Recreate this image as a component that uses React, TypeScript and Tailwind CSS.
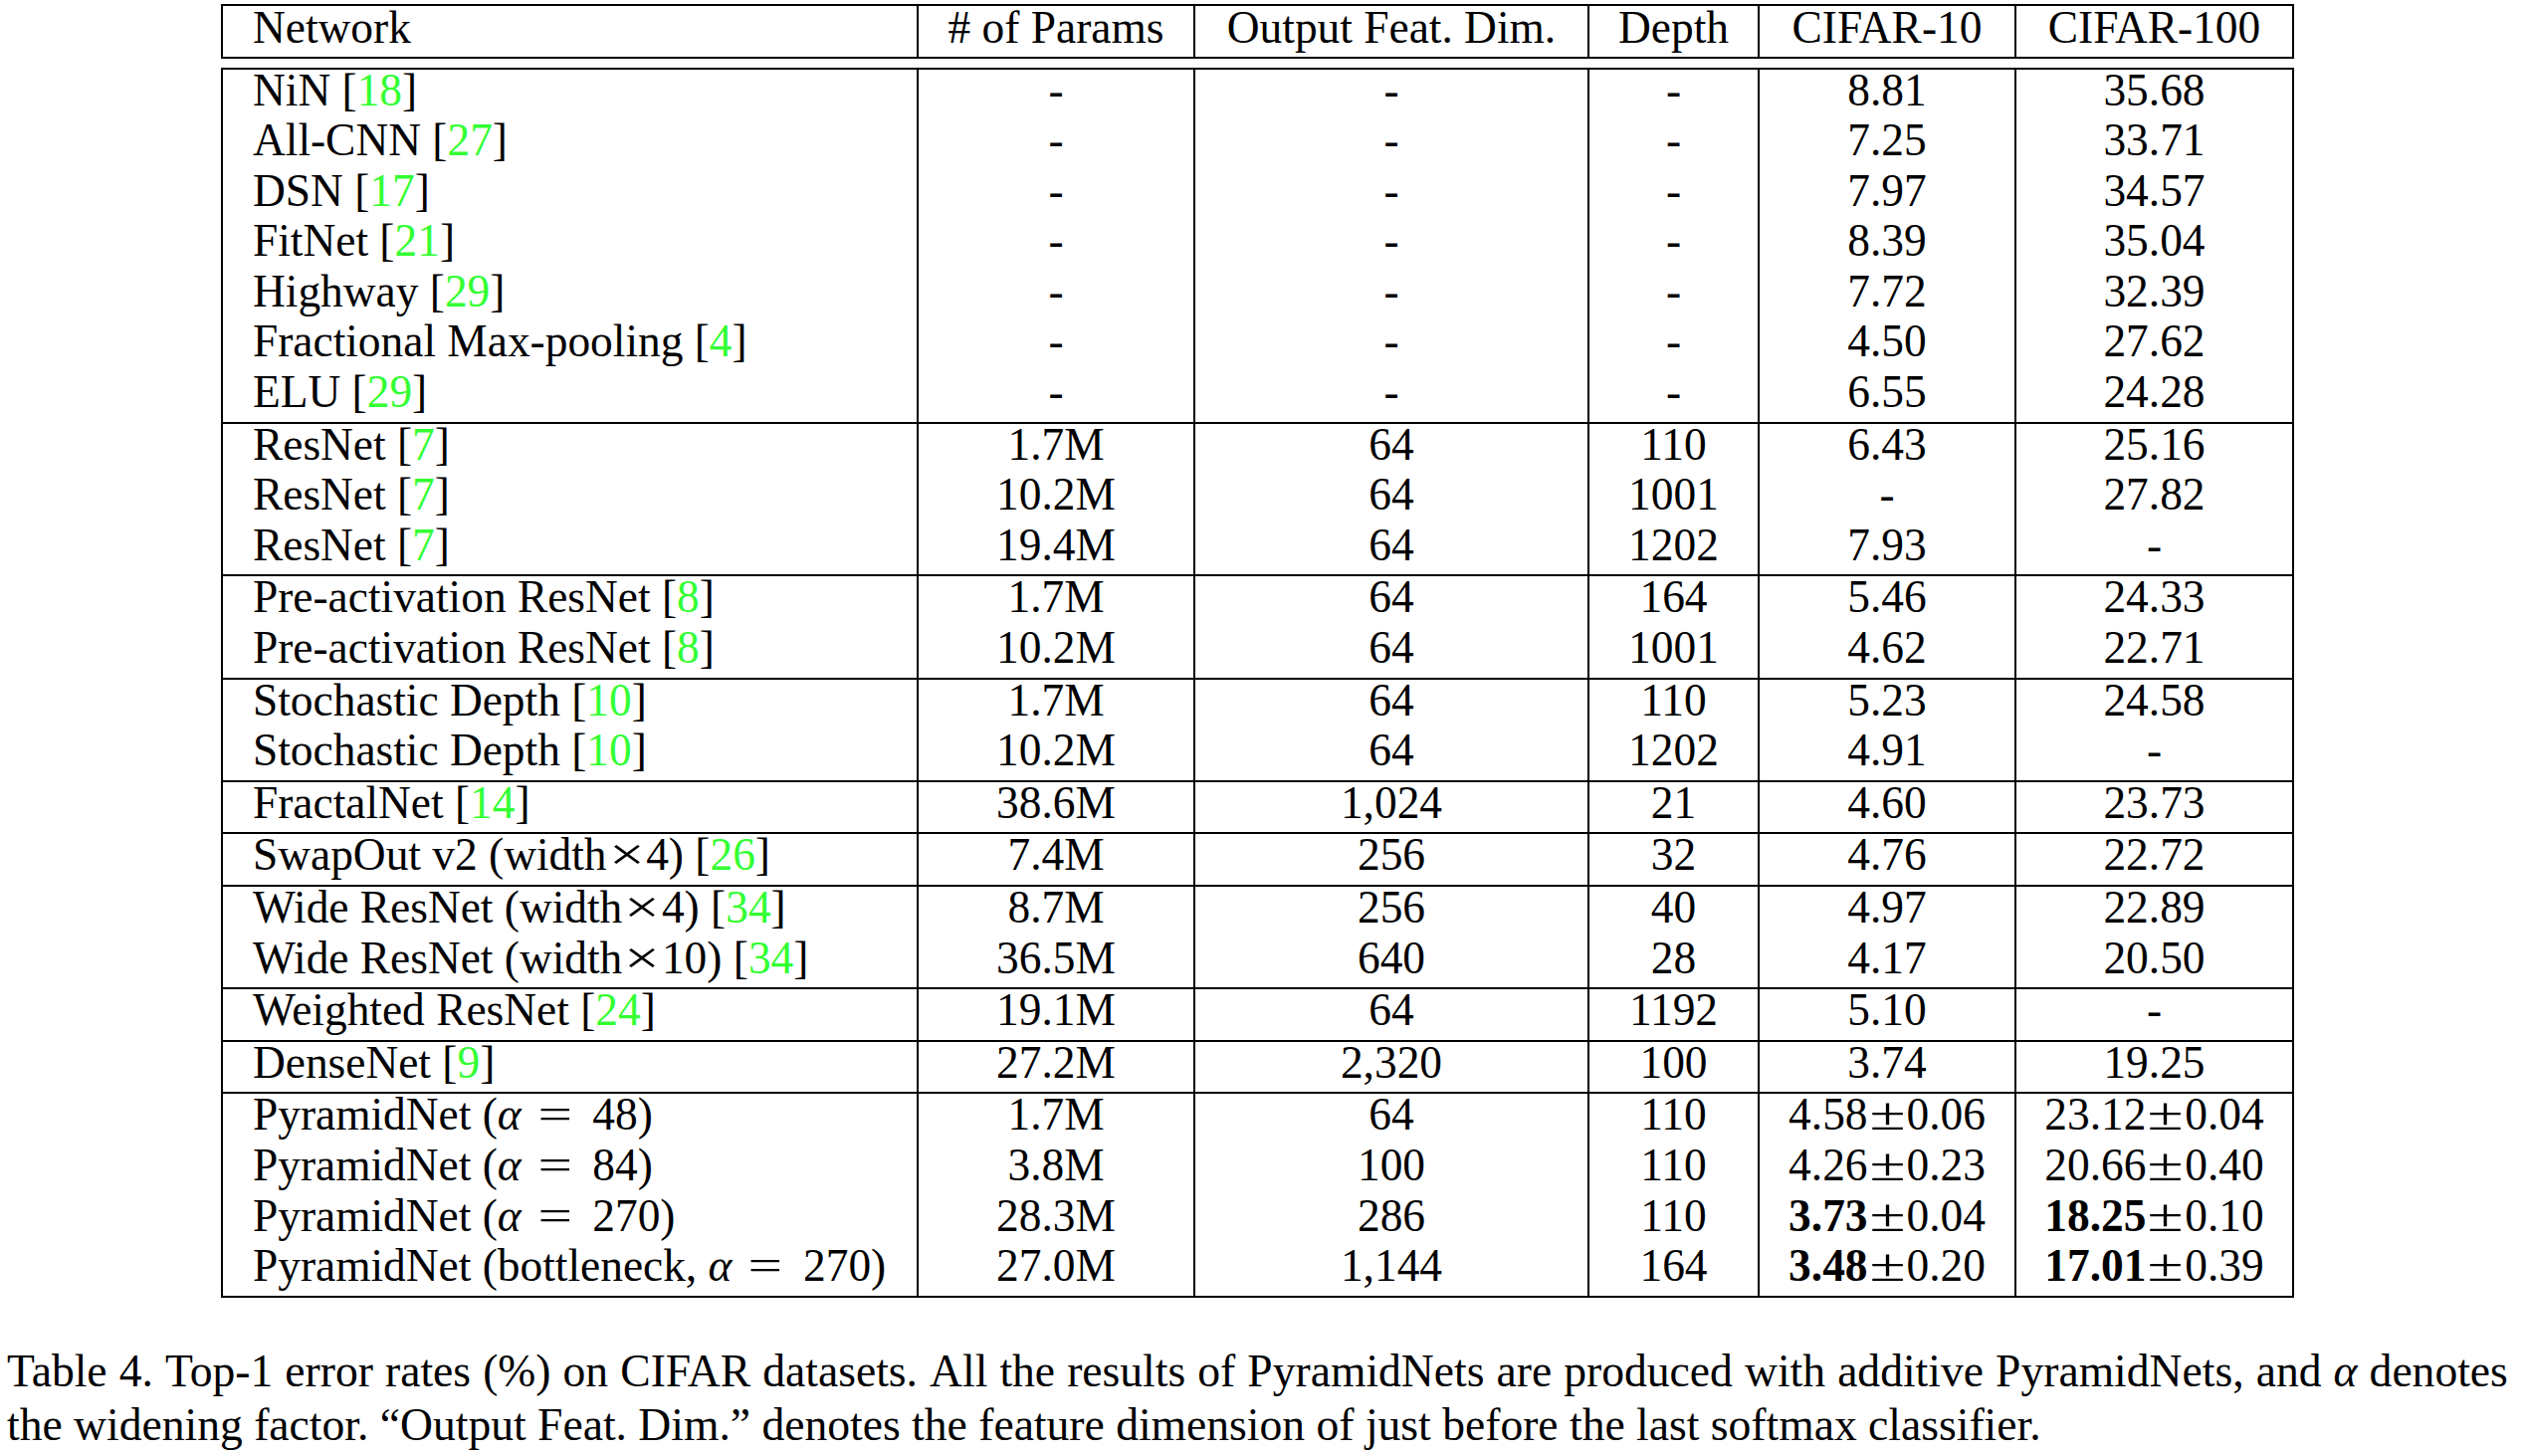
import React from 'react';

// citation marker, hyperref style green number
const Cite = ({ n }: { n: number }) => (
  <span>
    [<span className="text-[#33ff33]">{n}</span>]
  </span>
);

// math-mode alpha = value, CM spacing is wider than the text font
const AlphaEq = ({ v }: { v: string }) => (
  <>
    <span className="italic">α</span>
    <span className="inline-block scale-x-[1.35] ml-[21px] mr-[25px]">=</span>
    {v}
  </>
);

const Times = () => <span className="inline-block scale-x-[1.4] mx-[7px]">×</span>;

const PM = ({ v, e, bold }: { v: string; e: string; bold?: boolean }) => (
  <span>
    <span className={bold ? 'font-bold' : ''}>{v}</span>
    <span className="inline-block scale-x-[1.45] mx-[7px]">±</span>
    {e}
  </span>
);

type Row = { net: React.ReactNode; vals: React.ReactNode[] };

const groups: Row[][] = [
  [
    { net: <>NiN <Cite n={18} /></>, vals: ['-', '-', '-', '8.81', '35.68'] },
    { net: <>All-CNN <Cite n={27} /></>, vals: ['-', '-', '-', '7.25', '33.71'] },
    { net: <>DSN <Cite n={17} /></>, vals: ['-', '-', '-', '7.97', '34.57'] },
    { net: <>FitNet <Cite n={21} /></>, vals: ['-', '-', '-', '8.39', '35.04'] },
    { net: <>Highway <Cite n={29} /></>, vals: ['-', '-', '-', '7.72', '32.39'] },
    { net: <>Fractional Max-pooling <Cite n={4} /></>, vals: ['-', '-', '-', '4.50', '27.62'] },
    { net: <>ELU <Cite n={29} /></>, vals: ['-', '-', '-', '6.55', '24.28'] },
  ],
  [
    { net: <>ResNet <Cite n={7} /></>, vals: ['1.7M', '64', '110', '6.43', '25.16'] },
    { net: <>ResNet <Cite n={7} /></>, vals: ['10.2M', '64', '1001', '-', '27.82'] },
    { net: <>ResNet <Cite n={7} /></>, vals: ['19.4M', '64', '1202', '7.93', '-'] },
  ],
  [
    { net: <>Pre-activation ResNet <Cite n={8} /></>, vals: ['1.7M', '64', '164', '5.46', '24.33'] },
    { net: <>Pre-activation ResNet <Cite n={8} /></>, vals: ['10.2M', '64', '1001', '4.62', '22.71'] },
  ],
  [
    { net: <>Stochastic Depth <Cite n={10} /></>, vals: ['1.7M', '64', '110', '5.23', '24.58'] },
    { net: <>Stochastic Depth <Cite n={10} /></>, vals: ['10.2M', '64', '1202', '4.91', '-'] },
  ],
  [{ net: <>FractalNet <Cite n={14} /></>, vals: ['38.6M', '1,024', '21', '4.60', '23.73'] }],
  [{ net: <>SwapOut v2 (width<Times />4) <Cite n={26} /></>, vals: ['7.4M', '256', '32', '4.76', '22.72'] }],
  [
    { net: <>Wide ResNet (width<Times />4) <Cite n={34} /></>, vals: ['8.7M', '256', '40', '4.97', '22.89'] },
    { net: <>Wide ResNet (width<Times />10) <Cite n={34} /></>, vals: ['36.5M', '640', '28', '4.17', '20.50'] },
  ],
  [{ net: <>Weighted ResNet <Cite n={24} /></>, vals: ['19.1M', '64', '1192', '5.10', '-'] }],
  [{ net: <>DenseNet <Cite n={9} /></>, vals: ['27.2M', '2,320', '100', '3.74', '19.25'] }],
  [
    {
      net: <>PyramidNet (<AlphaEq v="48" />)</>,
      vals: ['1.7M', '64', '110', <PM v="4.58" e="0.06" />, <PM v="23.12" e="0.04" />],
    },
    {
      net: <>PyramidNet (<AlphaEq v="84" />)</>,
      vals: ['3.8M', '100', '110', <PM v="4.26" e="0.23" />, <PM v="20.66" e="0.40" />],
    },
    {
      net: <>PyramidNet (<AlphaEq v="270" />)</>,
      vals: ['28.3M', '286', '110', <PM v="3.73" e="0.04" bold />, <PM v="18.25" e="0.10" bold />],
    },
    {
      net: <>PyramidNet (bottleneck, <AlphaEq v="270" />)</>,
      vals: ['27.0M', '1,144', '164', <PM v="3.48" e="0.20" bold />, <PM v="17.01" e="0.39" bold />],
    },
  ],
];

const headers = ['# of Params', 'Output Feat. Dim.', 'Depth', 'CIFAR-10', 'CIFAR-100'];

const cols = 'grid grid-cols-[697px_278px_396px_171px_258px_279px]';

export default function App() {
  return (
    <div className="w-[2538px] h-[1463px] bg-white text-black font-['Liberation_Serif',serif] text-[45.4px] overflow-hidden">
      <div className="pl-[222px] pt-[4px]">
        {/* header box */}
        <div className={`${cols} w-[2083px] border-2 border-black`}>
          <div className="h-[50.5px] leading-[44px] pl-[30px] whitespace-nowrap">Network</div>
          {headers.map((h) => (
            <div key={h} className="h-[50.5px] leading-[44px] border-l-2 border-black text-center whitespace-nowrap">
              {h}
            </div>
          ))}
        </div>

        {/* body box, after the double rule */}
        <div className="mt-[9px] w-[2083px] border-2 border-black">
          {groups.map((g, gi) => (
            <div key={gi} className={`${cols} ${gi > 0 ? 'border-t-2 border-black' : ''}`}>
              <div className="flex flex-col pl-[30px]">
                {g.map((r, ri) => (
                  <div key={ri} className="h-[50.6px] leading-[43px] whitespace-nowrap">
                    {r.net}
                  </div>
                ))}
              </div>
              {[0, 1, 2, 3, 4].map((c) => (
                <div key={c} className="flex flex-col border-l-2 border-black text-center">
                  {g.map((r, ri) => (
                    <div key={ri} className="h-[50.6px] leading-[43px] whitespace-nowrap">
                      {r.vals[c]}
                    </div>
                  ))}
                </div>
              ))}
            </div>
          ))}
        </div>
      </div>

      {/* caption */}
      <div className="mt-[47px] pl-[7px] w-[2520px] text-[45.6px] leading-[54px]">
        <div className="whitespace-nowrap flex justify-between">
          {'Table 4. Top-1 error rates (%) on CIFAR datasets. All the results of PyramidNets are produced with additive PyramidNets, and'
            .split(' ')
            .map((w, i) => (
              <span key={i}>{w}</span>
            ))}
          <span className="italic">α</span>
          <span>denotes</span>
        </div>
        <div className="whitespace-nowrap">
          the widening factor. “Output Feat. Dim.” denotes the feature dimension of just before the last softmax classifier.
        </div>
      </div>
    </div>
  );
}
